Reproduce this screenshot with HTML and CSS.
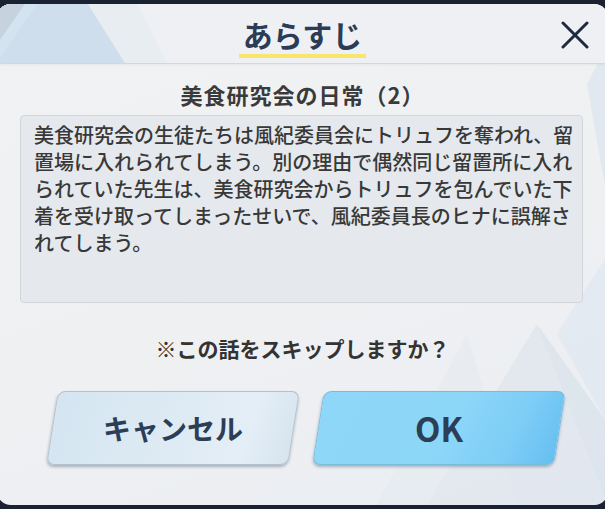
FILE: index.html
```html
<!DOCTYPE html>
<html lang="ja">
<head>
  <meta charset="UTF-8">
  <meta name="viewport" content="width=device-width, initial-scale=1.0">
  <title>あらすじ</title>
  <link rel="stylesheet" href="styles.css">
</head>
<body>
  <div class="dialog">
    <!-- 背景の三角模様 -->
    <svg class="deco" viewBox="0 0 611 501" preserveAspectRatio="none">
      <polygon points="611,250 560,330 611,420" fill="#dce6f0" opacity="0.6"/>
      <polygon points="540,320 430,501 611,501" fill="#d9e2ec" opacity="0.5"/>
      <polygon points="540,320 611,420 611,501" fill="#cfdbe7" opacity="0.5"/>
      <polygon points="470,330 380,501 520,501" fill="#e3e9f0" opacity="0.5"/>
      <polygon points="590,80 611,40 611,200" fill="#d7e3ef" opacity="0.6"/>
    </svg>

    <header class="head">
      <svg class="head-deco" viewBox="0 0 200 59" preserveAspectRatio="none">
        <polygon points="0,0 91,0 128,59 0,59" fill="#d4e3f0"/>
        <polygon points="0,0 28,0 0,40" fill="#c6d3df"/>
        <polygon points="0,59 40,0 91,0 128,59" fill="#cbdbea" opacity="0.6"/>
        <polygon points="91,0 128,59 170,59 140,0" fill="#e6ebf0" opacity="0.7"/>
      </svg>
      <h1 class="title">あらすじ</h1>
      <button class="close" aria-label="閉じる">
        <svg viewBox="0 0 28 28" width="28" height="28">
          <path d="M2 2 L26 26 M26 2 L2 26" stroke="#1f2a3d" stroke-width="3" stroke-linecap="round" fill="none"/>
        </svg>
      </button>
    </header>

    <div class="content">
      <h2 class="episode">美食研究会の日常（2）</h2>
      <div class="summary">美食研究会の生徒たちは風紀委員会にトリュフを奪われ、留置場に入れられてしまう。別の理由で偶然同じ留置所に入れられていた先生は、美食研究会からトリュフを包んでいた下着を受け取ってしまったせいで、風紀委員長のヒナに誤解されてしまう。</div>
      <p class="ask">※この話をスキップしますか？</p>
      <div class="actions">
        <button class="btn cancel"><span>キャンセル</span></button>
        <button class="btn ok"><span>OK</span></button>
      </div>
    </div>
  </div>
</body>
</html>
```

FILE: styles.css
```css
body {
  margin: 0;
  padding-top: 4px;
  background: #1a2131;
  height: 509px;
  box-sizing: border-box;
  overflow: hidden;
  font-family: "Noto Sans CJK JP", "Noto Sans", sans-serif;
}

.dialog {
  position: relative;
  margin: 0 -3px;
  height: 501px;
  border-radius: 14px;
  overflow: hidden;
  background: linear-gradient(160deg, #f1f2f4 0%, #eff0f2 60%, #e9edf2 100%);
}

.deco {
  position: absolute;
  left: 0;
  top: 0;
  width: 100%;
  height: 100%;
}

/* ヘッダー */
.head {
  position: relative;
  height: 59px;
  background: #eef0f3;
  border-bottom: 1px solid #d3d8de;
  box-shadow: 0 1px 2px rgba(0, 0, 0, 0.05);
  text-align: center;
}

.head-deco {
  position: absolute;
  left: 0;
  top: 0;
  width: 200px;
  height: 59px;
}

.title {
  position: relative;
  display: inline-block;
  margin: 10px 0 0;
  padding: 0 4px;
  font-size: 30px;
  line-height: 40px;
  font-weight: 700;
  color: #2b3c57;
  border-bottom: 4px solid #f7e56c;
}

.close {
  position: absolute;
  right: 19px;
  top: 17px;
  padding: 0;
  border: 0;
  background: none;
  line-height: 0;
}

/* 本文 */
.content {
  position: relative;
}

.episode {
  margin: 15px 0 0;
  font-size: 22px;
  line-height: 30px;
  font-weight: 700;
  letter-spacing: 1px;
  color: #3a3a3a;
  text-align: center;
}

.summary {
  margin: 6px 25px 0 23px;
  height: 181px;
  padding: 5px 4px 0 13px;
  border: 1px solid #d2d6db;
  border-radius: 4px;
  background: rgba(228, 232, 237, 0.92);
  font-size: 20px;
  line-height: 27px;
  font-weight: 500;
  color: #383838;
}

.ask {
  margin: 31px 0 0;
  font-size: 21px;
  line-height: 28px;
  font-weight: 700;
  color: #333;
  text-align: center;
}

.actions {
  display: flex;
  justify-content: center;
  gap: 24px;
  margin-top: 29px;
  padding-left: 6px;
}

.btn {
  width: 242px;
  height: 74px;
  padding: 0;
  border-radius: 8px;
  transform: skewX(-9deg);
  font-family: inherit;
  font-weight: 700;
  color: #2c3d56;
  box-shadow: 0 2px 3px rgba(40, 60, 80, 0.35);
}

.btn span {
  display: inline-block;
  transform: skewX(9deg);
}

.cancel {
  border: 1px solid #b3c2ce;
  background: linear-gradient(100deg, #d4e5f1 0%, #dfebf4 55%, #e4eef6 80%, #d6e4ef 100%);
  font-size: 28px;
}

.ok {
  border: 1px solid #78bcdc;
  background: linear-gradient(110deg, #8fd7f8 0%, #8cd6f8 55%, #7dcdf6 80%, #66bff0 100%);
  font-size: 33px;
}
```
